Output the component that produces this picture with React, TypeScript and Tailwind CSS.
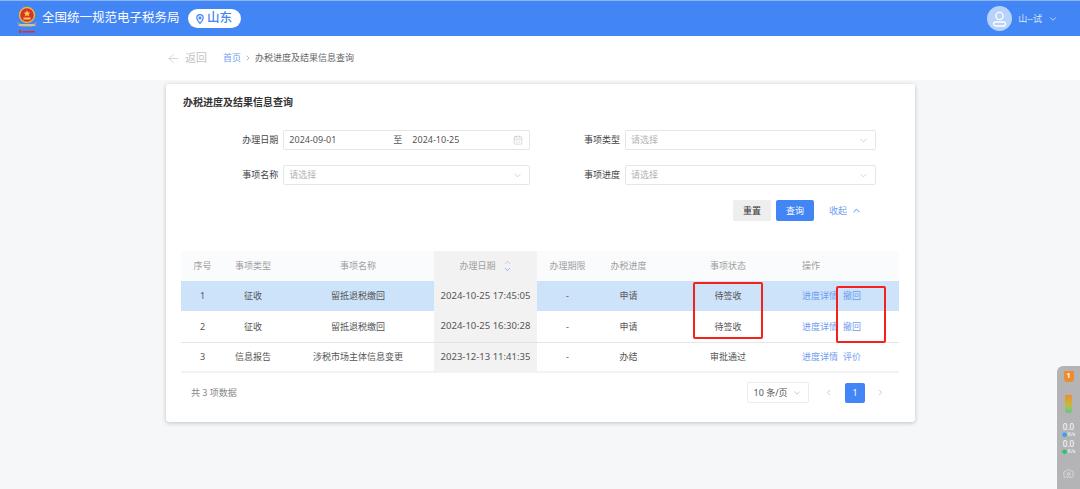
import { ArrowLeft, CalendarDays, ChevronDown, ChevronLeft, ChevronRight, ChevronUp, Camera } from 'lucide-react';

const rows = [
  { no: '1', type: '征收', name: '留抵退税缴回', date: '2024-10-25 17:45:05', step: '申请', state: '待签收', action: '撤回', active: true },
  { no: '2', type: '征收', name: '留抵退税缴回', date: '2024-10-25 16:30:28', step: '申请', state: '待签收', action: '撤回', active: false },
  { no: '3', type: '信息报告', name: '涉税市场主体信息变更', date: '2023-12-13 11:41:35', step: '办结', state: '审批通过', action: '评价', active: false },
];

function Emblem() {
  return (
    <svg width="24" height="30" viewBox="0 0 24 30">
      <path d="M2 17c3 5 17 5 20 0l-1 4c-4 3-14 3-18 0z" fill="#9a9a8c" />
      <path d="M5 20h14l2 2H3z" fill="#c9c4a8" />
      <circle cx="12" cy="11" r="7.5" fill="#d8332a" />
      <circle cx="12" cy="11" r="7.5" fill="none" stroke="#e8b53a" strokeWidth="1.5" />
      <path d="M12 6l1 2.4 2.4.2-1.8 1.6.6 2.4-2.2-1.3-2.2 1.3.6-2.4-1.8-1.6 2.4-.2z" fill="#f4cc4a" />
      <rect x="8.5" y="13.5" width="7" height="2" fill="#f4cc4a" />
      <rect x="4" y="26" width="2" height="3" fill="#d8332a" />
      <rect x="7" y="27" width="13" height="1.5" fill="#d8332a" />
    </svg>
  );
}

function Field({ label, placeholder }: { label: string; placeholder: string }) {
  return (
    <div className="flex items-center">
      <span className="w-[95px] pr-[5px] text-right text-[9px] text-[#444]">{label}</span>
      <div className="flex h-5 w-[251px] items-center justify-between rounded-[2px] border border-[#e6e6e6] bg-white pl-[5px] pr-[6px] text-[9px] text-[#b3b3b3]">
        <span>{placeholder}</span>
        <ChevronDown size={11} strokeWidth={1.2} color="#b0b0b0" />
      </div>
    </div>
  );
}

export default function App() {
  return (
    <div
      className="relative flex h-[489px] w-[1080px] flex-col overflow-hidden bg-[#f6f7f9]"
      style={{ fontFamily: '"Noto Sans", "Noto Sans CJK SC", sans-serif' }}
    >
      {/* 顶部导航 */}
      <header className="flex h-9 items-center justify-between border-t border-[#8fb4f5] bg-[#4285f4] pl-[15px] pr-[22px] text-white">
        <div className="flex items-center">
          <Emblem />
          <span className="ml-[3px] text-[12.5px]">全国统一规范电子税务局</span>
          <div className="ml-2 flex h-[19px] w-[53px] items-center justify-center gap-[3px] rounded-full bg-white text-[12.5px] font-medium text-[#4285f4]">
            <svg width="8" height="10" viewBox="0 0 8 10" fill="none" stroke="#4285f4" strokeWidth="1.2">
              <path d="M4 9.3C2 7 .8 5.6.8 3.9a3.2 3.2 0 0 1 6.4 0C7.200 5.600 6 7 4 9.300z" />
              <circle cx="4" cy="3.900" r="1" />
            </svg>
            山东
          </div>
        </div>
        <div className="flex items-center">
          <div className="flex h-[25px] w-[25px] items-center justify-center rounded-full bg-[#b7d2fb]">
            <svg width="15" height="16" viewBox="0 0 15 16" fill="none" stroke="#fff" strokeWidth="1.300">
              <circle cx="7.500" cy="5" r="3.600" />
              <rect x="1.500" y="11" width="12" height="4" rx="2" />
            </svg>
          </div>
          <span className="ml-[6px] text-[9px] text-[#dbe8fd]">山--试</span>
          <ChevronDown size={10} className="ml-[6px]" color="#dbe8fd" />
        </div>
      </header>

      {/* 面包屑 */}
      <div className="flex h-11 items-center bg-white pl-[166px]">
        <ArrowLeft size={15} strokeWidth={1.2} color="#c8c8c8" />
        <span className="ml-[4px] text-[11px] text-[#c4c4c4]">返回</span>
        <span className="ml-4 text-[9px] text-[#6f9df0]">首页</span>
        <ChevronRight size={8} className="mx-[3px]" color="#999" />
        <span className="text-[9px] text-[#666]">办税进度及结果信息查询</span>
      </div>

      {/* 主卡片 */}
      <main className="ml-[166px] mt-1 flex h-[338px] w-[749px] flex-col rounded-[3px] bg-white px-[15px] shadow-[0_1px_4px_rgba(0,0,0,0.22)]">
        <h1 className="mt-[11px] h-[15px] pl-[2px] text-[10px] leading-[15px] font-bold text-[#333]">办税进度及结果信息查询</h1>

        <div className="mt-[20px] grid grid-cols-[340px_1fr] gap-y-[15px] pl-[9px]">
          <div className="flex items-center">
            <span className="w-[95px] pr-[5px] text-right text-[9px] text-[#444]">办理日期</span>
            <div className="flex h-5 w-[251px] items-center justify-between rounded-[2px] border border-[#e6e6e6] bg-white pl-[5px] pr-[6px] text-[9px] text-[#555]">
              <span>2024-09-01</span>
              <span className="ml-[57px]">至</span>
              <span className="ml-[10px]">2024-10-25</span>
              <CalendarDays size={10} strokeWidth={1} color="#aaa" className="ml-auto" />
            </div>
          </div>
          <Field label="事项类型" placeholder="请选择" />
          <Field label="事项名称" placeholder="请选择" />
          <Field label="事项进度" placeholder="请选择" />
        </div>

        <div className="mt-[15px] flex items-center justify-end pr-[38px]">
          <button className="h-[21px] w-[38px] rounded-[2px] bg-[#eeeeee] text-[9px] text-[#333]">重置</button>
          <button className="ml-[5px] h-[21px] w-[38px] rounded-[2px] bg-[#4285f4] text-[9px] text-white">查询</button>
          <span className="ml-[15px] text-[9px] text-[#6f9df0]">收起</span>
          <ChevronUp size={11} className="ml-[4px]" color="#4285f4" />
        </div>

        <table className="mt-[30px] w-[718px] table-fixed border-b-2 border-[#f3f3f3] text-center text-[9px]">
          <colgroup>
            <col className="w-[43px]" />
            <col className="w-[58px]" />
            <col className="w-[152px]" />
            <col className="w-[103px]" />
            <col className="w-[61px]" />
            <col className="w-[61px]" />
            <col className="w-[138px]" />
            <col className="w-[102px]" />
          </colgroup>
          <thead>
            <tr className="h-[30px] bg-[#fafbfc] text-[#a0a0a0]">
              <th className="font-normal">序号</th>
              <th className="font-normal">事项类型</th>
              <th className="font-normal">事项名称</th>
              <th className="bg-[#f2f2f2] font-normal">
                <span className="inline-flex items-center gap-[7px]">
                  办理日期
                  <span className="flex flex-col">
                    <ChevronUp size={9} strokeWidth={1.200} color="#999" className="-mb-[2px]" />
                    <ChevronDown size={9} strokeWidth={1.500} color="#4285f4" />
                  </span>
                </span>
              </th>
              <th className="font-normal">办理期限</th>
              <th className="font-normal">办税进度</th>
              <th className="font-normal">事项状态</th>
              <th className="pl-[5px] text-left font-normal">操作</th>
            </tr>
          </thead>
          <tbody className="text-[#555]">
            {rows.map((row) => (
              <tr key={row.no} className={row.active ? 'h-[30px] bg-[#cde3fa]' : row.no === '2' ? 'h-[31px] border-b border-[#e4e4e4]' : 'h-[30px]'}>
                <td>{row.no}</td>
                <td>{row.type}</td>
                <td>{row.name}</td>
                <td className="bg-[#f2f2f2] text-[9.500px]">{row.date}</td>
                <td>-</td>
                <td>{row.step}</td>
                <td>{row.state}</td>
                <td className="pl-[5px] text-left text-[#6f9df0]">
                  <span>进度详情</span>
                  <span className="ml-[5px]">{row.action}</span>
                </td>
              </tr>
            ))}
          </tbody>
        </table>

        <div className="mt-[9px] flex items-center justify-between pl-[10px] pr-[15px]">
          <span className="text-[9px] text-[#888]">共 3 项数据</span>
          <div className="flex items-center">
            <div className="flex h-[21px] w-[62px] items-center justify-center gap-[5px] rounded-[2px] border border-[#ececec] text-[9px] text-[#555]">
              10 条/页
              <ChevronDown size={10} strokeWidth={1.200} color="#999" />
            </div>
            <ChevronLeft size={9} className="ml-[15px]" color="#bbb" />
            <div className="ml-[12px] flex h-5 w-5 items-center justify-center rounded-[2px] bg-[#4285f4] text-[9px] text-white">1</div>
            <ChevronRight size={9} className="ml-[11px]" color="#bbb" />
          </div>
        </div>
      </main>

      {/* 标注框 */}
      <div className="absolute left-[693px] top-[282px] h-[57px] w-[70px] rounded-[2px] border-2 border-[#f5221b]" />
      <div className="absolute left-[836px] top-[286px] h-[57px] w-[50px] rounded-[2px] border-2 border-[#f5221b]" />

      {/* 右下角悬浮条 */}
      <aside className="absolute bottom-0 right-0 flex h-[123px] w-[23px] flex-col items-center rounded-tl-[6px] bg-[#b4b4b6] pt-[5px] text-white">
        <div className="flex h-[11px] w-[10px] items-center justify-center rounded-b-[4px] rounded-t-[1px] bg-[#ee8c2c] text-[7px] font-bold">1</div>
        <div className="mt-[13px] h-[18px] w-[7px] rounded-b-[3px] bg-gradient-to-b from-[#ef8b2c] via-[#c9b63c] to-[#4fc98a]" />
        <div className="mt-[10px] text-[8px] leading-[8px]">0.0</div>
        <div className="flex items-center gap-[1px] text-[5px] leading-[6px]">
          <span className="text-[#3aa0f5]">●</span>K/s
        </div>
        <div className="mt-[3px] text-[8px] leading-[8px]">0.0</div>
        <div className="flex items-center gap-[1px] text-[5px] leading-[6px]">
          <span className="text-[#2cc46b]">●</span>K/s
        </div>
        <Camera size={11} strokeWidth={1.300} className="mt-[14px]" color="#eee" />
      </aside>
    </div>
  );
}
